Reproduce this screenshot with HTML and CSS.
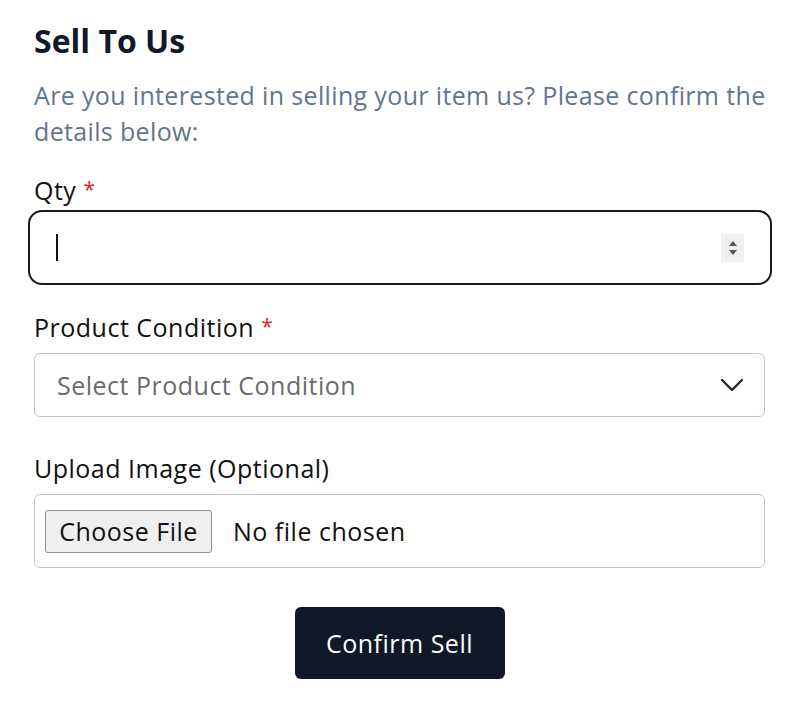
FILE: index.html
```html
<!DOCTYPE html>
<html lang="en">
<head>
<meta charset="utf-8">
<title>Sell To Us</title>
<link rel="stylesheet" href="styles.css">
</head>
<body>
<main class="sell">
  <h2 class="title">Sell To Us</h2>
  <p class="desc">Are you interested in selling your item us? Please confirm the details below:</p>

  <div class="field field-qty">
    <label class="label">Qty <span class="req">*</span></label>
    <div class="num-input">
      <span class="caret"></span>
      <span class="spin">
        <svg width="12" height="22" viewBox="0 0 12 22"><path d="M2 9 L6 4 L10 9 Z" fill="#555"/><path d="M2 13 L6 18 L10 13 Z" fill="#555"/></svg>
      </span>
    </div>
  </div>

  <div class="field field-cond">
    <label class="label">Product Condition <span class="req">*</span></label>
    <div class="select">
      <span class="placeholder">Select Product Condition</span>
      <svg class="chev" width="24" height="14" viewBox="0 0 24 14"><path d="M2 2 L12 12 L22 2" fill="none" stroke="#1f2937" stroke-width="2.4" stroke-linecap="round" stroke-linejoin="round"/></svg>
    </div>
  </div>

  <div class="field field-upload">
    <label class="label">Upload Image (Optional)</label>
    <div class="file">
      <span class="file-btn">Choose File</span>
      <span class="file-name">No file chosen</span>
    </div>
  </div>

  <div class="actions">
    <button class="confirm" type="button">Confirm Sell</button>
  </div>
</main>
</body>
</html>
```

FILE: styles.css
```css
* { box-sizing: border-box; }
html, body { margin: 0; padding: 0; background: #fff; }
body {
  font-family: "Open Sans", "Lato", sans-serif;
  color: #111;
  letter-spacing: 0.5px;
}
.sell {
  width: 800px;
  padding: 21px 35px 0 34px;
}
.title {
  margin: 0;
  font-size: 32px;
  line-height: 40px;
  font-weight: 700;
  letter-spacing: 0;
  color: #111827;
}
.desc {
  margin: 16px -8px 0 0;
  font-size: 25px;
  line-height: 36px;
  letter-spacing: 0.35px;
  color: #64748b;
}
.field-qty { margin-top: 23px; }
.field-cond { margin-top: 24px; }
.field-upload { margin-top: 33px; }
.label {
  display: block;
  font-size: 25px;
  line-height: 36px;
  color: #111;
}
.req {
  color: #dc2626;
  font-size: 21px;
  line-height: 1;
  vertical-align: 3px;
}
.num-input {
  margin: 2px -7px 0 -6px;
  height: 75px;
  border: 2px solid #1a1a1a;
  border-radius: 14px;
  display: flex;
  align-items: center;
  justify-content: space-between;
  padding: 0 26px 0 26px;
}
.caret {
  width: 2px;
  height: 27px;
  background: #111;
}
.spin {
  width: 23px;
  height: 28px;
  background: #efefef;
  display: flex;
  align-items: center;
  justify-content: center;
}
.select {
  margin-top: 8px;
  height: 64px;
  border: 1px solid #c6c6c6;
  border-radius: 6px;
  display: flex;
  align-items: center;
  justify-content: space-between;
  padding: 0 20px 0 22px;
}
.placeholder {
  font-size: 25px;
  color: #6b6b6b;
}
.file {
  margin-top: 8px;
  height: 74px;
  border: 1px solid #c6c6c6;
  border-radius: 6px;
  display: flex;
  align-items: center;
  padding: 0 10px;
  gap: 21px;
}
.file-btn {
  height: 43px;
  width: 167px;
  background: #efefef;
  border: 1px solid #8f8f8f;
  border-radius: 3px;
  display: flex;
  align-items: center;
  justify-content: center;
  font-size: 25px;
  color: #111;
}
.file-name {
  font-size: 25px;
  color: #111;
}
.actions {
  margin-top: 39px;
  display: flex;
  justify-content: center;
}
.confirm {
  width: 210px;
  height: 72px;
  background: #111827;
  color: #fff;
  border: none;
  border-radius: 6px;
  font-family: inherit;
  font-size: 25px;
  letter-spacing: 0.5px;
}
```
